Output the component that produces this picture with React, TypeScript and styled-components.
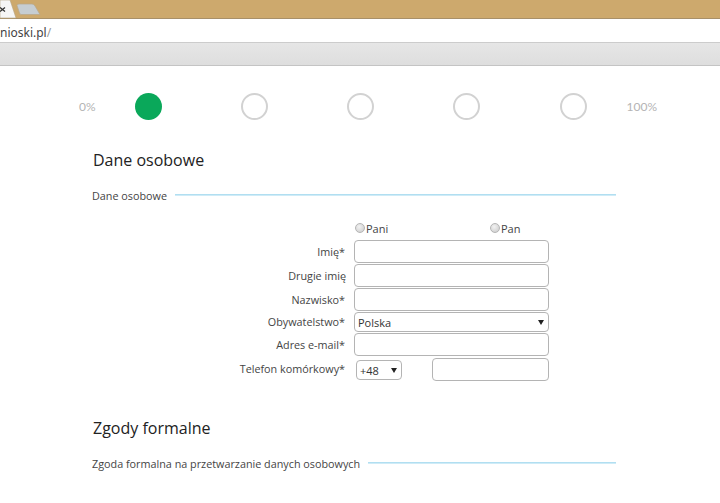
import React from "react";
import styled, { createGlobalStyle } from "styled-components";

const Global = createGlobalStyle`
  html, body { margin: 0; padding: 0; background: #fff; overflow: hidden; }
  body { width: 720px; height: 503px; font-family: "Open Sans", "Noto Sans", sans-serif; color: #333; }
  * { box-sizing: border-box; }
`;

const Page = styled.div`
  width: 720px;
  height: 503px;
  overflow: hidden;
  background: #fff;
`;

const TabStrip = styled.div`
  height: 19px;
  background: #cda96d;
  border-bottom: 1px solid #a89069;
  display: flex;
  align-items: flex-start;
`;

const TabArt = styled.svg`
  display: block;
  flex: none;
`;

const AddressBar = styled.div`
  height: 24px;
  padding-top: 3px;
  background: #fff;
  border-bottom: 1px solid #ccc;
  display: flex;
  align-items: center;
  font-size: 12px;
  color: #444;
  font-family: "Noto Sans", sans-serif;
`;

const Slash = styled.span`
  color: #999;
`;

const BookmarkBar = styled.div`
  height: 23px;
  background: linear-gradient(#e6e6e6, #dedede);
  border-bottom: 1px solid #c4c4c4;
`;

const Stepper = styled.div`
  height: 27px;
  margin-top: 27px;
  padding-left: 79px;
  display: grid;
  grid-template-columns: 55.5px repeat(4, 106.25px) 130px 1fr;
  align-items: center;
`;

const Percent = styled.div`
  font-family: "Lato", sans-serif;
  font-size: 12px;
  color: #b4b4b4;
`;

const Dot = styled.div<{ $on?: boolean }>`
  flex: none;
  width: 27px;
  height: 27px;
  border-radius: 50%;
  background: ${(p) => (p.$on ? "#0aa85a" : "#fff")};
  border: ${(p) => (p.$on ? "none" : "2px solid #d2d2d2")};
`;

const EndCell = styled.div`
  display: flex;
  align-items: center;
  gap: 40px;
`;

const Section = styled.section`
  padding-left: 93px;
  width: 616px;
`;

const Title = styled.h2`
  margin: 0;
  font-family: "Open Sans", sans-serif;
  font-weight: 400;
  font-size: 16px;
  line-height: 20px;
  color: #222;
`;

const Legend = styled.div`
  margin-left: -1px;
  display: flex;
  align-items: center;
  gap: 8px;
  font-size: 10.8px;
  line-height: 16px;
  color: #444;
  white-space: nowrap;
`;

const Rule = styled.span`
  flex: 1;
  height: 2px;
  margin-top: -2px;
  background: linear-gradient(#a2d8ee, #def2fa);
`;

const Form = styled.div`
  display: grid;
  grid-template-columns: 253px 195px;
  column-gap: 8px;
  font-size: 10.8px;
  color: #444;
`;

const Radios = styled.div`
  grid-column: 2;
  display: grid;
  grid-template-columns: 135px 1fr;
  height: 16px;
  margin-bottom: 3px;
  align-items: center;
`;

const Radio = styled.label`
  display: flex;
  align-items: center;
  font-size: 11px;
  line-height: 14px;
`;

const RadioMark = styled.span`
  width: 10px;
  height: 10px;
  margin: -3px 1px 0 1px;
  border-radius: 50%;
  border: 1px solid #b5b5b5;
  background: radial-gradient(circle at 40% 35%, #f2f2f2, #c9c9c9);
`;

const Label = styled.label<{ $nudge?: number }>`
  text-align: right;
  align-self: center;
  padding-right: ${(p) => p.$nudge ?? 1}px;
  padding-bottom: 2px;
  white-space: nowrap;
`;

const Field = styled.input<{ $h?: number; $mt?: number; $mb?: number }>`
  display: block;
  width: 195px;
  height: ${(p) => p.$h ?? 23}px;
  margin: ${(p) => p.$mt ?? 0}px 0 ${(p) => p.$mb ?? 1}px;
  padding: 0 4px;
  background: #fff;
  border: 1px solid #b4b4b4;
  border-radius: 4px;
  outline: none;
`;

const SelectBox = styled.div<{ $w: number; $mb?: number }>`
  width: ${(p) => p.$w}px;
  height: 20px;
  margin-bottom: ${(p) => p.$mb ?? 0}px;
  padding: 0 4px 0 3px;
  display: flex;
  align-items: center;
  justify-content: space-between;
  background: #fff;
  border: 1px solid #b4b4b4;
  border-radius: 4px;
  font-size: 11px;
  color: #333;
`;

const Caret = styled.span`
  width: 0;
  height: 0;
  border-left: 3px solid transparent;
  border-right: 3px solid transparent;
  border-top: 5px solid #222;
`;

const Phone = styled.div`
  display: flex;
  align-items: flex-end;
  padding-left: 2px;
  height: 23px;
`;

const PhoneField = styled(Field)`
  width: 117px;
  margin: 0 0 0 30px;
`;

const Gap = styled.div<{ $h: number }>`
  height: ${(p) => p.$h}px;
`;

export default function App() {
  return (
    <Page>
      <Global />
      <TabStrip>
        <TabArt width="48" height="19" viewBox="0 0 48 19">
          <path d="M0 0H10L16 18H0Z" fill="#f6f6f6" stroke="#b5a585" strokeWidth="0.6" />
          <path d="M0 7.5L5 11.5M5 7.5L0 11.5" stroke="#333" strokeWidth="1.3" />
          <path d="M17 5.5Q17 4 19 4H32Q34 4 35 6L40 14.5H21Q20 14.5 19.5 13Z" fill="#c6cdd2" stroke="#b7a88b" strokeWidth="0.7" />
        </TabArt>
      </TabStrip>
      <AddressBar>
        nioski.pl<Slash>/</Slash>
      </AddressBar>
      <BookmarkBar />
      <Stepper>
        <Percent>0%</Percent>
        <Dot $on />
        <Dot />
        <Dot />
        <Dot />
        <EndCell>
          <Dot />
          <Percent>100%</Percent>
        </EndCell>
      </Stepper>
      <Gap $h={30} />
      <Section>
        <Title>Dane osobowe</Title>
        <Gap $h={18} />
        <Legend>
          Dane osobowe
          <Rule />
        </Legend>
      </Section>
      <Gap $h={17} />
      <Section>
        <Form>
          <Radios>
            <Radio>
              <RadioMark />
              Pani
            </Radio>
            <Radio>
              <RadioMark />
              Pan
            </Radio>
          </Radios>
          <Label>Imię*</Label>
          <Field />
          <Label $nudge={0}>Drugie imię</Label>
          <Field />
          <Label>Nazwisko*</Label>
          <Field />
          <Label>Obywatelstwo*</Label>
          <SelectBox $w={195}>
            Polska
            <Caret />
          </SelectBox>
          <Label>Adres e-mail*</Label>
          <Field $mt={1} $mb={2} />
          <Label>Telefon komórkowy*</Label>
          <Phone>
            <SelectBox $w={46} $mb={1}>
              +48
              <Caret />
            </SelectBox>
            <PhoneField />
          </Phone>
        </Form>
      </Section>
      <Gap $h={37} />
      <Section>
        <Title>Zgody formalne</Title>
        <Gap $h={18} />
        <Legend>
          Zgoda formalna na przetwarzanie danych osobowych
          <Rule />
        </Legend>
      </Section>
    </Page>
  );
}
